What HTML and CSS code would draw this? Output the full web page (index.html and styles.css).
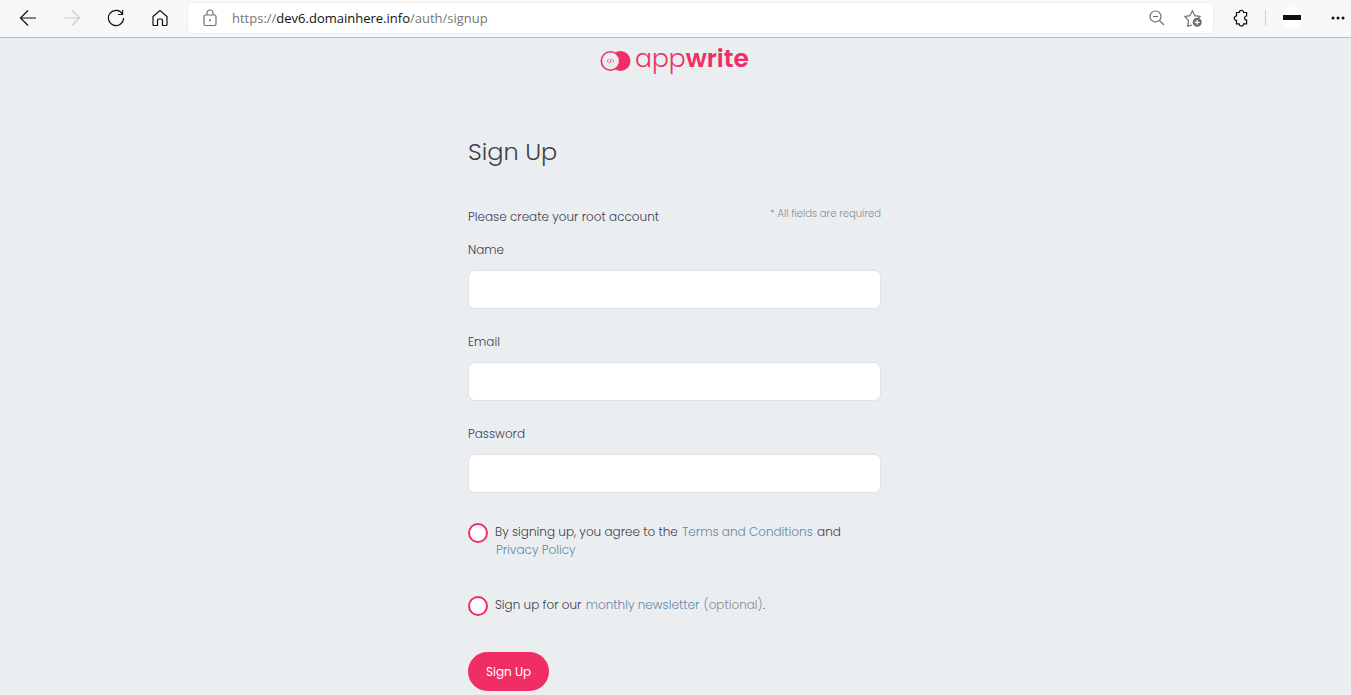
FILE: index.html
```html
<!DOCTYPE html>
<html lang="en">
<head>
    <meta charset="UTF-8">
    <meta name="viewport" content="width=device-width, initial-scale=1.0">
    <title>Sign Up - Appwrite</title>
    <link rel="stylesheet" href="styles.css">
</head>
<body>
    <!-- Browser toolbar -->
    <header class="toolbar">
        <nav class="nav-buttons">
            <button type="button" class="icon-btn" aria-label="Back">
                <svg width="18" height="18" viewBox="0 0 18 18"><path d="M17 9H1.500M9 1.500L1.500 9L9 16.500"/></svg>
            </button>
            <button type="button" class="icon-btn disabled" aria-label="Forward" disabled>
                <svg width="18" height="18" viewBox="0 0 18 18"><path d="M1 9h15.500M9 1.500L16.500 9L9 16.500"/></svg>
            </button>
            <button type="button" class="icon-btn" aria-label="Refresh">
                <svg width="18" height="18" viewBox="0 0 18 18"><path d="M15.500 5A7.600 7.600 0 1 0 16.600 9M15.600 1v4.500H11"/></svg>
            </button>
            <button type="button" class="icon-btn" aria-label="Home">
                <svg width="18" height="18" viewBox="0 0 18 18"><path d="M2 7.500L9 1.500l7 6V15.500q0 1-1 1h-3.500V11q0-1-1-1h-3q-1 0-1 1v5.500H3q-1 0-1-1z"/></svg>
            </button>
        </nav>
        <div class="address-bar">
            <svg class="lock" width="14" height="18" viewBox="0 0 14 18"><rect x="1" y="6" width="12" height="10.500" rx="1.500"/><path d="M4 6V4a3 3 0 0 1 6 0v2"/><circle class="dot" cx="7" cy="11.300" r="1"/></svg>
            <span class="url">https://<b>dev6.domainhere.info</b>/auth/signup</span>
            <button type="button" class="icon-btn muted" aria-label="Zoom out">
                <svg width="18" height="18" viewBox="0 0 18 18"><circle cx="7.500" cy="7.500" r="5.500"/><path d="M11.500 11.500L16 16M5 7.500h5"/></svg>
            </button>
            <button type="button" class="icon-btn muted" aria-label="Add to favorites">
                <svg width="18" height="18" viewBox="0 0 18 18"><path d="M8 16l-4.300 1.200.8-5.500L1 7.500l4.900-.8L8.400 1.800l2.500 4.900 5.100.8-2 2"/><circle class="badge" cx="13.200" cy="13.300" r="4.500"/><path class="plus" d="M13.200 11v4.600M10.900 13.300h4.600"/></svg>
            </button>
        </div>
        <div class="tools">
            <button type="button" class="icon-btn" aria-label="Extensions">
                <svg width="18" height="18" viewBox="0 0 18 18"><path d="M4.500 3.500h2.700a2.200 2.200 0 0 1 4.400 0h3V7a2 2 0 0 0 0 4v3.800h-3a2.200 2.200 0 0 1-4.400 0H4.500v-3.400a2.200 2.200 0 0 1 0-4.500z"/></svg>
            </button>
            <span class="divider"></span>
            <button type="button" class="profile" aria-label="Profile"><span class="avatar"></span></button>
            <button type="button" class="icon-btn" aria-label="Settings and more">
                <svg width="18" height="18" viewBox="0 0 18 18"><circle class="dot" cx="4" cy="9" r="1.500"/><circle class="dot" cx="9" cy="9" r="1.500"/><circle class="dot" cx="14" cy="9" r="1.500"/></svg>
            </button>
        </div>
    </header>

    <!-- Sign up page -->
    <main class="page">
        <a class="logo" href="#">
            <svg width="31" height="22" viewBox="0 0 31 22"><circle class="logo-fill" cx="20.500" cy="11" r="10"/><circle class="logo-ring" cx="10.500" cy="11" r="9.200"/><path class="logo-code" d="M8.700 9.400L7.200 11l1.500 1.600M12.300 9.400l1.500 1.600-1.500 1.600M11.100 8.700l-1.200 4.600"/></svg>
            <span class="brand">app<b>write</b></span>
        </a>

        <form class="signup">
            <h1>Sign Up</h1>
            <div class="intro">
                <p>Please create your root account</p>
                <small>* All fields are required</small>
            </div>

            <label class="field-label" for="name">Name</label>
            <input class="field" type="text" id="name" required>

            <label class="field-label" for="email">Email</label>
            <input class="field" type="email" id="email" required>

            <label class="field-label" for="password">Password</label>
            <input class="field" type="password" id="password" required>

            <div class="agree">
                <input type="checkbox" id="terms" required>
                <label for="terms">By signing up, you agree to the <a href="#">Terms and Conditions</a> and <a href="#">Privacy Policy</a></label>
            </div>
            <div class="agree">
                <input type="checkbox" id="newsletter">
                <label for="newsletter">Sign up for our <a href="#">monthly newsletter</a> <span class="optional">(optional)</span>.</label>
            </div>

            <button type="submit" class="submit">Sign Up</button>
        </form>
    </main>
</body>
</html>
```

FILE: styles.css
```css
/* General Styles */
* {
    box-sizing: border-box;
}

body {
    margin: 0;
    background-color: #ebeef1;
    color: #40404c;
    font-family: Poppins, Inter, sans-serif;
    font-size: 12px;
    font-weight: 300;
    line-height: 18px;
}

button {
    border: none;
    background: none;
    padding: 0;
    font-family: inherit;
    cursor: pointer;
}

/* Browser toolbar */
.toolbar {
    display: flex;
    align-items: center;
    height: 38px;
    padding: 0 4px 2px 19px;
    background-color: #f7f7f7;
    border-bottom: 1px solid #b9bdc1;
}

.nav-buttons {
    display: flex;
    gap: 26px;
    margin-right: 19px;
}

.icon-btn {
    display: flex;
    color: #111;
}

.icon-btn.disabled {
    color: #ccc;
}

.icon-btn.muted {
    color: #6e6e6e;
}

.toolbar svg {
    fill: none;
    stroke: currentColor;
    stroke-width: 1.2;
}

.toolbar .dot,
.toolbar .badge {
    fill: currentColor;
    stroke: none;
}

.toolbar .plus {
    stroke: #fff;
}

.address-bar {
    display: flex;
    flex: 1;
    align-items: center;
    gap: 18px;
    height: 30px;
    padding: 0 11px 0 15px;
    background-color: #fff;
    border-radius: 4px;
    box-shadow: 0 0 2px rgba(0, 0, 0, 0.1);
}

.lock {
    color: #6e6e6e;
}

.url {
    flex: 1;
    margin-left: -3px;
    color: #767676;
    font-family: "Segoe UI", "Open Sans", sans-serif;
    font-size: 13px;
    font-weight: 400;
}

.url b {
    color: #111;
    font-weight: 400;
}

.tools {
    display: flex;
    align-items: center;
    gap: 15px;
    margin-left: 19px;
}

.divider {
    width: 1px;
    height: 16px;
    background-color: #d0d0d0;
}

.profile {
    display: flex;
    align-items: center;
    justify-content: center;
    width: 22px;
    height: 22px;
    margin-right: 11px;
    background-color: #fff;
    border-radius: 50%;
}

.avatar {
    width: 18px;
    height: 5px;
    background-color: #111;
}

/* Page */
.page {
    max-width: 415px;
    margin: 0 auto;
    padding: 7px 2px 4px 0;
}

.logo {
    display: flex;
    align-items: center;
    justify-content: center;
    gap: 4px;
    color: #f02e65;
    text-decoration: none;
}

.logo-fill {
    fill: #f02e65;
}

.logo-ring {
    fill: #ebeef1;
    stroke: #f02e65;
    stroke-width: 1.6;
}

.logo-code {
    fill: none;
    stroke: #f02e65;
    stroke-width: 0.8;
}

.brand {
    padding-bottom: 4px;
    font-size: 25px;
    line-height: 28px;
}

.brand b {
    font-weight: 600;
}

/* Form */
.signup h1 {
    margin: 58px 0 39px;
    font-size: 24px;
    font-weight: 300;
    line-height: 34px;
}

.intro {
    display: flex;
    justify-content: space-between;
    margin-bottom: 15px;
}

.intro p {
    margin: 0;
}

.intro small {
    color: #8a8a90;
    font-size: 10px;
    line-height: 12px;
}

.field-label {
    display: block;
    margin-bottom: 11px;
}

.field {
    display: block;
    width: 100%;
    height: 39px;
    margin-bottom: 24px;
    padding: 0 14px;
    background-color: #fff;
    border: 1px solid #e1e1e3;
    border-radius: 7px;
    font: inherit;
}

.agree {
    display: flex;
    align-items: flex-start;
    gap: 7px;
    margin-top: 30px;
    padding-right: 16px;
}

.agree + .agree {
    margin-top: 37px;
}

.agree input {
    flex: none;
    appearance: none;
    width: 20px;
    height: 20px;
    margin: 0;
    background-color: #fff;
    border: 2px solid #f02e65;
    border-radius: 50%;
}

.agree input:checked {
    background-color: #f02e65;
}

.agree a {
    margin: 0 1px;
    color: #6088a8;
    text-decoration: none;
}

.optional {
    color: #8a8a90;
}

.submit {
    height: 39px;
    margin-top: 36px;
    padding: 0 18px;
    background-color: #f02e65;
    border-radius: 20px;
    color: #fff;
    font-size: 12px;
    font-weight: 400;
}
```
